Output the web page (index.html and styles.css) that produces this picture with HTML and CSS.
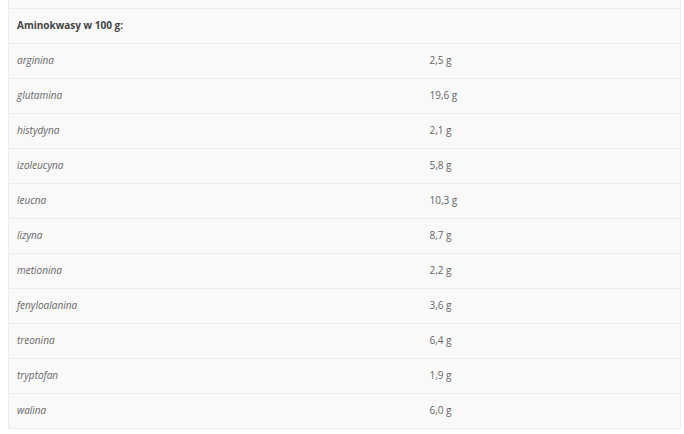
FILE: index.html
```html
<!DOCTYPE html>
<html lang="pl">
<head>
    <meta charset="UTF-8">
    <meta name="viewport" content="width=device-width, initial-scale=1.0">
    <title>Aminokwasy</title>
    <link rel="stylesheet" href="styles.css">
</head>
<body>
    <table class="tabela">
        <colgroup>
            <col class="col-nazwa">
            <col class="col-wartosc">
        </colgroup>
        <tr class="poprzedni"><td></td><td></td></tr>
        <tr class="naglowek"><td>Aminokwasy w 100 g:</td><td></td></tr>
        <tr><td class="nazwa">arginina</td><td>2,5 g</td></tr>
        <tr><td class="nazwa">glutamina</td><td>19,6 g</td></tr>
        <tr><td class="nazwa">histydyna</td><td>2,1 g</td></tr>
        <tr><td class="nazwa">izoleucyna</td><td>5,8 g</td></tr>
        <tr><td class="nazwa">leucna</td><td>10,3 g</td></tr>
        <tr><td class="nazwa">lizyna</td><td>8,7 g</td></tr>
        <tr><td class="nazwa">metionina</td><td>2,2 g</td></tr>
        <tr><td class="nazwa">fenyloalanina</td><td>3,6 g</td></tr>
        <tr><td class="nazwa">treonina</td><td>6,4 g</td></tr>
        <tr><td class="nazwa">tryptofan</td><td>1,9 g</td></tr>
        <tr><td class="nazwa">walina</td><td>6,0 g</td></tr>
    </table>
</body>
</html>
```

FILE: styles.css
```css
* { margin: 0; padding: 0; box-sizing: border-box; }
body { background-color: #fff; color: #666; font-family: 'Open Sans', sans-serif; font-size: 10px; }
.tabela { width: 673px; margin-left: 8px; border-collapse: collapse; table-layout: fixed; background-color: #f9f9f9; border-left: 1px solid #ececec; border-right: 1px solid #ececec; }
.col-nazwa { width: 413px; }
.tabela td { padding: 7px 8px 9px; line-height: 18px; height: 35px; border-bottom: 1px solid #ececec; vertical-align: middle; }
.tabela .poprzedni td { height: 8px; padding: 0; }
.naglowek td { font-weight: bold; color: #444; }
.nazwa { font-style: italic; }
```
